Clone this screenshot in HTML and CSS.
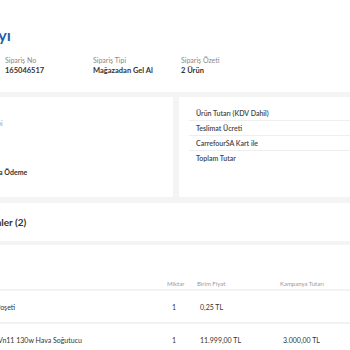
FILE: index.html
```html
<!DOCTYPE html>
<html lang="tr">
<head>
    <meta charset="UTF-8">
    <meta name="viewport" content="width=device-width, initial-scale=1.0">
    <title>Sipariş Detayı</title>
    <link rel="stylesheet" href="styles.css">
</head>
<body>
    <div class="page">

        <div class="header">
            <h1 class="title">Sipariş Detayı</h1>
            <div class="info">
                <div class="info-item">
                    <div class="info-label">Sipariş No</div>
                    <div class="info-value">165046517</div>
                </div>
                <div class="info-item">
                    <div class="info-label">Sipariş Tipi</div>
                    <div class="info-value">Mağazadan Gel Al</div>
                </div>
                <div class="info-item">
                    <div class="info-label">Sipariş Özeti</div>
                    <div class="info-value">2 Ürün</div>
                </div>
            </div>
        </div>

        <div class="cards">
            <div class="card card-left">
                <div class="pay-label">Ödeme Tipi</div>
                <div class="pay-value">Mağazada Ödeme</div>
            </div>
            <div class="card card-right">
                <div class="sum-row">Ürün Tutarı (KDV Dahil)</div>
                <div class="sum-row">Teslimat Ücreti</div>
                <div class="sum-row">CarrefourSA Kart ile</div>
                <div class="sum-row last">Toplam Tutar</div>
            </div>
        </div>

        <div class="section">
            <h2 class="section-title">Ürünler (2)</h2>
        </div>

        <div class="table">
            <div class="table-row table-head">
                <div class="col-name">Ürün</div>
                <div class="col-qty">Miktar</div>
                <div class="col-price">Birim Fiyat</div>
                <div class="col-camp">Kampanya Tutarı</div>
            </div>
            <div class="table-row">
                <div class="col-name">Bez Poşeti</div>
                <div class="col-qty">1</div>
                <div class="col-price">0,25 TL</div>
                <div class="col-camp"></div>
            </div>
            <div class="table-row">
                <div class="col-name">Kiwi Vn11 130w Hava Soğutucu</div>
                <div class="col-qty">1</div>
                <div class="col-price">11.999,00 TL</div>
                <div class="col-camp">3.000,00 TL</div>
            </div>
        </div>

    </div>
</body>
</html>
```

FILE: styles.css
```css
body {
    margin: 0;
    background-color: #f4f4f4;
    color: #333;
    font-family: Lato, "Open Sans", sans-serif;
    overflow: hidden;
}
.page {
    width: 700px;
    margin-left: -130px;
}
.header {
    background-color: #fff;
    height: 92px;
    padding-top: 26px;
    box-sizing: border-box;
    margin-bottom: 5px;
}
.title {
    margin: 0 0 11px 43px;
    font-size: 16px;
    line-height: 18px;
    font-weight: bold;
    color: #1f5fa8;
}
.info {
    display: flex;
    padding-left: 135px;
}
.info-item {
    width: 88px;
}
.info-label {
    font-size: 7px;
    line-height: 10px;
    color: #8a8a8a;
}
.info-value {
    font-size: 7.5px;
    line-height: 12px;
    font-weight: bold;
    color: #333;
}
.cards {
    display: flex;
    gap: 6px;
    height: 100px;
    margin-bottom: 6px;
}
.card {
    background-color: #fff;
}
.card-left {
    width: 250px;
    margin-left: 53px;
    padding: 21px 0 0 48px;
    box-sizing: border-box;
}
.pay-label {
    font-size: 7px;
    line-height: 10px;
    color: #999;
    margin: 0 0 39px -4px;
}
.pay-value {
    font-size: 7px;
    line-height: 10px;
    font-weight: bold;
    color: #333;
}
.card-right {
    flex: 1;
    padding: 9px 0 0 10px;
}
.sum-row {
    font-size: 7px;
    line-height: 14px;
    padding-left: 7px;
    font-weight: 600;
    color: #444;
    border-bottom: 1px solid #eee;
}
.sum-row.last {
    border-bottom: none;
}
.section {
    background-color: #fff;
    height: 38px;
    margin-bottom: 4px;
    display: flex;
    align-items: center;
}
.section-title {
    margin: 0 0 0 109px;
    font-size: 10px;
    font-weight: bold;
    color: #333;
}
.table {
    background-color: #fff;
    padding-top: 33px;
    height: 200px;
}
.table-row {
    display: grid;
    grid-template-columns: 297px 30px 83px 120px;
    align-items: center;
    font-size: 7px;
    height: 31px;
    border-bottom: 2px solid #f2f2f2;
}
.table-head {
    height: 10px;
    padding-bottom: 1px;
    font-size: 6px;
    color: #999;
}
.col-name {
    padding-left: 113px;
}
.table-row .col-qty {
    padding-left: 5px;
}
.table-head .col-qty {
    padding-left: 0;
}
.table-row .col-price,
.table-row .col-camp {
    padding-left: 3px;
}
.table-head .col-price,
.table-head .col-camp {
    padding-left: 0;
}
```
